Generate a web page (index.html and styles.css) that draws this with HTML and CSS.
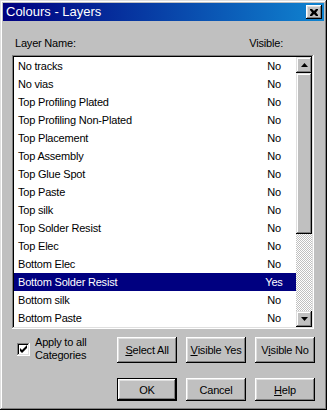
FILE: index.html
```html
<!DOCTYPE html>
<html>
<head>
<meta charset="utf-8">
<link rel="stylesheet" href="styles.css">
</head>
<body>
<div class="window">
  <div class="titlebar">
    <span class="title">Colours - Layers</span>
    <div class="close"><svg width="8" height="7" viewBox="0 0 8 7"><path d="M0 0h2l2 2 2-2h2v1l-2 2.5 2 2.5v1h-2l-2-2-2 2h-2v-1l2-2.5-2-2.5z" fill="#000"/></svg></div>
  </div>
  <div class="content">
    <div class="labels">
      <span>Layer Name:</span>
      <span class="vis-label">Visible:</span>
    </div>
    <div class="listbox">
      <ul class="rows">
        <li class="row"><span class="name">No tracks</span><span class="val">No</span></li>
        <li class="row"><span class="name">No vias</span><span class="val">No</span></li>
        <li class="row"><span class="name">Top Profiling Plated</span><span class="val">No</span></li>
        <li class="row"><span class="name">Top Profiling Non-Plated</span><span class="val">No</span></li>
        <li class="row"><span class="name">Top Placement</span><span class="val">No</span></li>
        <li class="row"><span class="name">Top Assembly</span><span class="val">No</span></li>
        <li class="row"><span class="name">Top Glue Spot</span><span class="val">No</span></li>
        <li class="row"><span class="name">Top Paste</span><span class="val">No</span></li>
        <li class="row"><span class="name">Top silk</span><span class="val">No</span></li>
        <li class="row"><span class="name">Top Solder Resist</span><span class="val">No</span></li>
        <li class="row"><span class="name">Top Elec</span><span class="val">No</span></li>
        <li class="row"><span class="name">Bottom Elec</span><span class="val">No</span></li>
        <li class="row selected"><span class="name">Bottom Solder Resist</span><span class="val">Yes</span></li>
        <li class="row"><span class="name">Bottom silk</span><span class="val">No</span></li>
        <li class="row"><span class="name">Bottom Paste</span><span class="val">No</span></li>
      </ul>
      <div class="scrollbar">
        <div class="sb-btn"><svg width="7" height="4" viewBox="0 0 7 4"><path d="M3.5 0L7 4H0z" fill="#000"/></svg></div>
        <div class="sb-thumb"></div>
        <div class="sb-track"></div>
        <div class="sb-btn"><svg width="7" height="4" viewBox="0 0 7 4"><path d="M0 0h7L3.5 4z" fill="#000"/></svg></div>
      </div>
    </div>
    <div class="controls">
      <div class="check">
        <span class="box"><svg width="9" height="9" viewBox="0 0 9 9"><path d="M1 3v3l2 2 5-5v-3l-5 5z" fill="#000"/></svg></span>
        <span class="check-text">Apply to all<br>Categories</span>
      </div>
      <div class="btns">
        <div class="btn"><u>S</u>elect All</div>
        <div class="btn"><u>V</u>isible Yes</div>
        <div class="btn">V<u>i</u>sible No</div>
      </div>
    </div>
    <div class="footer">
      <div class="btn short default">OK</div>
      <div class="btn short">Cancel</div>
      <div class="btn short"><u>H</u>elp</div>
    </div>
  </div>
</div>
</body>
</html>
```

FILE: styles.css
```css
html, body {
  margin: 0;
  padding: 0;
  background: #c0c0c0;
}
body {
  font-family: "Liberation Sans", Arial, sans-serif;
  font-size: 11px;
  letter-spacing: -0.2px;
  color: #000;
}
.window {
  box-sizing: border-box;
  width: 327px;
  height: 410px;
  padding: 3px;
  background: #c0c0c0;
  box-shadow: inset -1px -1px #000, inset 1px 1px #dfdfdf, inset -2px -2px #808080, inset 2px 2px #fff;
}
.titlebar {
  height: 18px;
  display: flex;
  align-items: flex-start;
  justify-content: space-between;
  background: linear-gradient(90deg, #000080, #1084d0);
}
.title {
  color: #fff;
  font-size: 13px;
  letter-spacing: 0;
  line-height: 18px;
  padding-left: 3px;
}
.close {
  box-sizing: border-box;
  width: 16px;
  height: 14px;
  margin: 2px 2px 0 0;
  background: #c0c0c0;
  display: flex;
  align-items: center;
  justify-content: center;
  box-shadow: inset -1px -1px #000, inset 1px 1px #fff, inset -2px -2px #808080, inset 2px 2px #dfdfdf;
}
.content {
  padding: 16px 9px 0 9px;
}
.labels {
  display: flex;
  line-height: 13px;
  height: 13px;
  padding-left: 3px;
  margin-bottom: 5px;
}
.vis-label {
  margin-left: auto;
  margin-right: 32px;
}
.listbox {
  box-sizing: border-box;
  width: 302px;
  height: 274px;
  padding: 2px;
  display: flex;
  background: #fff;
  box-shadow: inset -1px -1px #fff, inset 1px 1px #808080, inset -2px -2px #dfdfdf, inset 2px 2px #000;
}
.rows {
  list-style: none;
  margin: 0;
  padding: 0;
  flex: 1;
  overflow: hidden;
}
.row {
  height: 18px;
  line-height: 18px;
  display: flex;
  padding: 0 2px 0 4px;
}
.row .name {
  flex: 1;
}
.row .val {
  width: 40px;
  text-align: center;
}
.row.selected {
  background: #000080;
  color: #fff;
}
.scrollbar {
  width: 16px;
  display: flex;
  flex-direction: column;
}
.sb-btn, .sb-thumb {
  box-sizing: border-box;
  background: #c0c0c0;
  box-shadow: inset -1px -1px #000, inset 1px 1px #dfdfdf, inset -2px -2px #808080, inset 2px 2px #fff;
}
.sb-btn {
  height: 16px;
  display: flex;
  align-items: center;
  justify-content: center;
}
.sb-thumb {
  height: 161px;
}
.sb-track {
  flex: 1;
  background: repeating-conic-gradient(#fff 0 25%, #c0c0c0 0 50%) 0 0 / 2px 2px;
}
.controls {
  display: flex;
  margin-top: 8px;
  height: 26px;
}
.check {
  display: flex;
  align-items: flex-start;
  padding-left: 5px;
}
.box {
  box-sizing: border-box;
  width: 13px;
  height: 13px;
  margin-top: 6px;
  background: #fff;
  display: flex;
  align-items: center;
  justify-content: center;
  box-shadow: inset -1px -1px #fff, inset 1px 1px #808080, inset -2px -2px #dfdfdf, inset 2px 2px #000;
}
.check-text {
  margin-left: 5px;
  margin-top: -1px;
  line-height: 13px;
}
.btns, .footer {
  display: flex;
  gap: 9px;
  margin-left: auto;
}
.footer {
  justify-content: flex-end;
  margin-top: 15px;
  width: 302px;
}
.btn {
  box-sizing: border-box;
  width: 60px;
  height: 26px;
  display: flex;
  align-items: center;
  justify-content: center;
  background: #c0c0c0;
  box-shadow: inset -1px -1px #000, inset 1px 1px #fff, inset -2px -2px #808080, inset 2px 2px #dfdfdf;
}
.btn.short {
  height: 23px;
}
.btn.default {
  border: 1px solid #000;
  box-shadow: inset -1px -1px #000, inset 1px 1px #fff, inset -2px -2px #808080, inset 2px 2px #dfdfdf;
}
```
